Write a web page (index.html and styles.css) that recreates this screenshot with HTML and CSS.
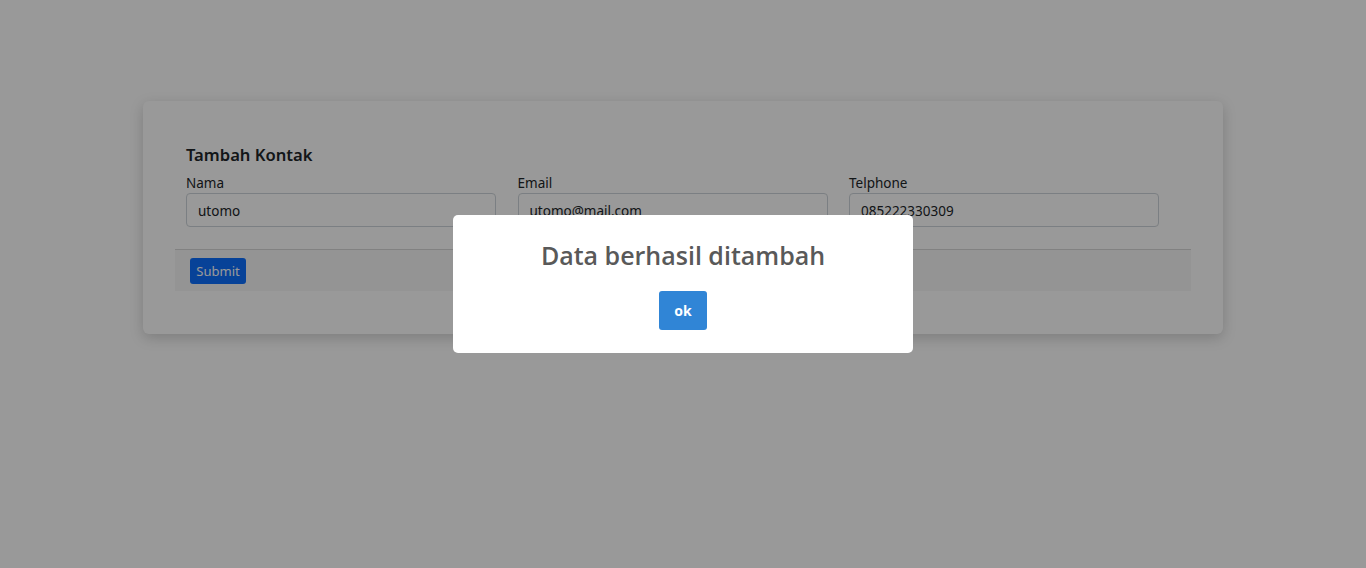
FILE: index.html
```html
<!DOCTYPE html>
<html>
<head>
<meta charset="utf-8">
<link rel="stylesheet" href="styles.css">
</head>
<body>
<div class="page">
  <div class="card">
    <form class="form">
      <div class="form-body">
        <h5 class="form-title">Tambah Kontak</h5>
        <div class="fields">
          <div class="field">
            <label class="label">Nama</label>
            <input class="input" type="text" value="utomo">
          </div>
          <div class="field">
            <label class="label">Email</label>
            <input class="input" type="text" value="utomo@mail.com">
          </div>
          <div class="field">
            <label class="label">Telphone</label>
            <input class="input" type="text" value="085222330309">
          </div>
        </div>
      </div>
      <div class="form-footer">
        <button class="btn-submit" type="button">Submit</button>
      </div>
    </form>
  </div>
</div>
<div class="backdrop">
  <div class="alert">
    <h2 class="alert-title">Data berhasil ditambah</h2>
    <div class="alert-actions">
      <button class="btn-ok" type="button">ok</button>
    </div>
  </div>
</div>
</body>
</html>
```
FILE: styles.css
```css
* { box-sizing: border-box; }
html, body { margin: 0; padding: 0; }
body {
  background: #fff;
  font-family: "Noto Sans", "Open Sans", sans-serif;
  color: #212529;
  width: 1366px;
  height: 568px;
  overflow: hidden;
}
.page {
  padding-top: 101px;
  display: flex;
  justify-content: center;
}
.card {
  width: 1080px;
  background: #fff;
  border-radius: 6px;
  box-shadow: 0 4px 14px rgba(0,0,0,0.18);
  padding: 32px 32px 43px;
}
.form-body {
  padding: 11px 11px 22px;
}
.form-title {
  margin: 0;
  font-size: 16.6px;
  font-weight: 600;
  line-height: 22px;
  height: 29px;
  padding-top: 0;
}
.fields {
  display: grid;
  grid-template-columns: repeat(3, 310px);
  column-gap: 21.5px;
}
.field { display: flex; flex-direction: column; }
.label {
  font-size: 13.5px;
  line-height: 20px;
}
.input {
  height: 34px;
  border: 1px solid #ced4da;
  border-radius: 4px;
  padding: 2px 11px 0;
  font-family: inherit;
  font-size: 13.5px;
  color: #212529;
  background: #fff;
  outline: none;
}
.form-footer {
  border-top: 1px solid rgba(0,0,0,0.125);
  background: rgba(0,0,0,0.03);
  height: 42px;
  padding: 8px 15px 0;
}
.btn-submit {
  height: 26px;
  width: 56px;
  padding: 0;
  border: none;
  border-radius: 3px;
  background: #0d6efd;
  color: #fff;
  font-family: inherit;
  font-size: 13px;
}
.backdrop {
  position: fixed;
  inset: 0;
  background: rgba(0,0,0,0.4);
  display: flex;
  justify-content: center;
  align-items: flex-start;
  padding-top: 215px;
}
.alert {
  width: 460px;
  height: 138px;
  background: #fff;
  border-radius: 5px;
  display: flex;
  flex-direction: column;
  align-items: center;
  padding-top: 21px;
}
.alert-title {
  margin: 0;
  font-family: "Open Sans", "Noto Sans", sans-serif;
  font-size: 25px;
  font-weight: 600;
  color: #595959;
  line-height: 38px;
}
.alert-actions {
  margin-top: 17px;
}
.btn-ok {
  width: 48px;
  height: 39px;
  border: none;
  border-radius: 3px;
  background: #3085d6;
  color: #fff;
  font-family: inherit;
  font-weight: 700;
  font-size: 14px;
  padding: 0;
}
```
